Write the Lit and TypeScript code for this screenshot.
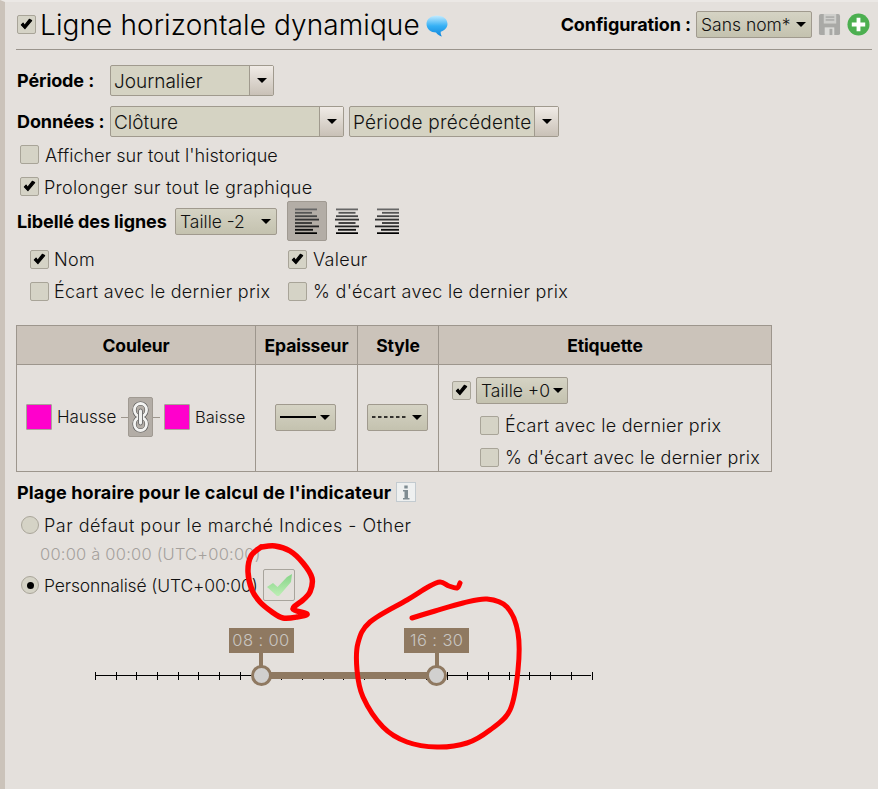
import { LitElement, html, css, svg } from "lit";
import { customElement } from "lit/decorators.js";

function smooth(p: number[][]): string {
  let d = `M${p[0][0]} ${p[0][1]}`;
  for (let i = 0; i < p.length - 1; i++) {
    const a = p[Math.max(0, i - 1)], b = p[i], c = p[i + 1], e = p[Math.min(p.length - 1, i + 2)];
    const c1 = [b[0] + (c[0] - a[0]) / 6, b[1] + (c[1] - a[1]) / 6];
    const c2 = [c[0] - (e[0] - b[0]) / 6, c[1] - (e[1] - b[1]) / 6];
    d += `C${c1[0].toFixed(1)} ${c1[1].toFixed(1)} ${c2[0].toFixed(1)} ${c2[1].toFixed(1)} ${c[0]} ${c[1]}`;
  }
  return d;
}
const RING1 = [[261,547],[275,546],[290,551],[303,563],[312,578],[310,592],[303,600],[293,609],[307,614],[297,617],[283,618],[272,612],[260,602],[252,590],[248,572],[251,556],[261,547]];
const RING2 = [[460,583],[457,588],[449,586],[440,582],[428,587],[407,600],[370,622],[358,643],[357,670],[363,697],[383,727],[407,742],[437,747],[467,743],[490,730],[510,710],[518,670],[518,633],[507,607],[487,599],[463,603],[435,611],[412,618]];

const tick = html`<svg class="tick" viewBox="0 0 16 16"><path d="M2.5 8.5 6.3 12.5 13.5 3.8 11 2.5 6 9 4.4 6.5Z" fill="#000" stroke="#000" stroke-width="1.2" stroke-linejoin="round"/></svg>`;
const cb = (on: boolean) => html`<span class="cb">${on ? tick : ""}</span>`;
const caret = html`<i class="caret"></i>`;

@customElement("app-root")
export class AppRoot extends LitElement {
  static styles = css`
    :host { display: block; width: 878px; height: 789px; position: relative; overflow: hidden;
      background: #e4e0dc; font-family: Inter, "Liberation Sans", sans-serif; font-size: 18px; color: #111; font-weight: 300; letter-spacing: 0.3px; }
    .page { box-sizing: border-box; height: 789px; border-left: 5px solid #cbc3ba; border-top: 2px solid #ebe8e5; padding: 0 6px 0 11px; }
    b { font-weight: 700; color: #000; letter-spacing: -0.1px; font-size: 18px; }
    .row { display: flex; align-items: center; }
    .head { border-bottom: 1px solid #9a948c; box-sizing: border-box; height: 48px; padding: 0 2px 2px 1px; }
    .title { font-size: 28px; font-weight: 300; margin-left: 4px; letter-spacing: 0.1px; color: #000; white-space: nowrap; }
    .bubble { width: 22px; height: 22px; margin-left: 6px; margin-top: 2px; flex: none; }
    .spacer { flex: 1; }
    .cfg { margin-right: 5px; white-space: nowrap; }
    .cb { width: 17px; height: 17px; flex: none; border: 1px solid #a8a498; border-radius: 2px; background: #d5d3c6; display: inline-flex; align-items: center; justify-content: center; }
    .tick { width: 15px; height: 15px; }
    .sel { box-sizing: border-box; display: flex; align-items: stretch; border: 1px solid #a09a8e; border-radius: 2px; background: #d5d3c3; height: 31px; }
    .sel span { flex: 1; padding: 2px 0 0 3px; align-self: center; font-size: 19px; white-space: nowrap; overflow: hidden; letter-spacing: 0; }
    .sel .btn { flex: none; width: 23px; border-left: 1px solid #a09a8e; background: linear-gradient(#f0ebe6, #c9c1b7); display: flex; align-items: center; justify-content: center; }
    .caret { display: block; flex: none; width: 0; height: 0; border: 5px solid transparent; border-top: 5px solid #000; border-bottom: 0; }
    .nat { box-sizing: border-box; display: flex; align-items: center; border: 1px solid #a09a8e; border-radius: 2px; background: linear-gradient(#d5d3c4, #c4c2af); height: 27px; padding: 0 5px 0 4px; justify-content: space-between; font-size: 17.500px; letter-spacing: 0; white-space: nowrap; }
    .r-per { height: 31px; margin-top: 15px; }
    .r-per b, .r-don b { width: 93px; padding-left: 1px; flex: none; white-space: nowrap; }
    .w1 { width: 164px; }
    .r-don { height: 31px; margin-top: 10px; }
    .w2 { width: 234px; }
    .w3 { width: 210px; margin-left: 5px; }
    .w3 span { letter-spacing: .25px; }
    .chk { height: 19px; margin-left: 4px; }
    .chk .cb { margin-right: 6px; }
    .c1 { margin-top: 8px; }
    .c2 { margin-top: 13px; }
    .chk .lab { white-space: nowrap; }
    .c1 .lab { letter-spacing: .05px; padding-top: 2px; }
    .c2 .lab { padding-top: 2px; }
    .c2 .cb { margin-right: 5px; }
    .r-lib { height: 40px; margin-top: 5px; }
    .r-lib b { width: 158px; padding-left: 1px; flex: none; white-space: nowrap; }
    .w4 { width: 102px; }
    .al { width: 40px; height: 40px; box-sizing: border-box; display: flex; align-items: center; justify-content: center; border-radius: 2px; }
    .al.on { background: #b3ada6; border: 1px solid #a09a92; margin-left: 10px; }
    .al svg { width: 24px; height: 26px; }
    .grid2 { display: grid; grid-template-columns: 258px auto; margin: 9px 0 0 14px; row-gap: 13px; height: 50px; }
    .grid2 .chk { margin: 0; }
    .grid2 .cb { margin-right: 5px; }
    .grid2 .chk:nth-child(even) .cb { margin-right: 6px; }
    table { border-collapse: collapse; margin-top: 25px; width: 755px; table-layout: fixed; }
    th, td { border: 1px solid #9d968d; padding: 0; }
    th { background: #cbc3ba; height: 38px; font-weight: 700; font-size: 17.500px; color: #000; letter-spacing: -0.1px; }
    td { height: 104px; padding-bottom: 2px; vertical-align: middle; }
    .colr { padding-left: 9px; }
    .sw { width: 24px; height: 24px; flex: none; background: #ff00cc; border: 1px solid #a8a498; border-radius: 1px; }
    .colr .t { margin-left: 5px; font-size: 17px; width: 64px; white-space: nowrap; letter-spacing: 0; }
    .colr .t.nr { width: auto; font-size: 16.500px; }
    .conn { height: 1px; width: 7px; flex: none; background: #9d968d; }
    .link { box-sizing: border-box; width: 25px; height: 40px; flex: none; background: #b3ada6; border: 1px solid #a09a92; border-radius: 2px; display: flex; align-items: center; justify-content: center; }
    .link svg { width: 19px; height: 32px; }
    .sw.two { margin-left: 4px; }
    .mid { display: flex; justify-content: center; padding-right: 2px; }
    .w5 { width: 61px; height: 27px; }
    .lbl { display: flex; flex-direction: column; padding: 11px 0 0 13px; height: 93px; margin-bottom: -2px; }
    .w6 { width: 92px; margin-left: 5px; padding-right: 4px; }
    .lbl .chk { margin: 12px 0 0 28px; }
    .lbl .first { height: 27px; }
    .lbl .chk + .chk { margin-top: 13px; }
    .r-pl { height: 20px; margin-top: 10px; }
    .r-pl b { letter-spacing: .13px; white-space: nowrap; padding-left: 1px; }
    .info { width: 20px; height: 20px; margin-left: 5px; flex: none; }
    .rad { width: 18px; height: 18px; flex: none; box-sizing: border-box; border-radius: 50%; background: #d5d3c6; border: 1px solid #aaa69a; display: flex; align-items: center; justify-content: center; margin-right: 5px; }
    .rad i { display: block; width: 7px; height: 7px; border-radius: 50%; background: #000; }
    .r-r1 { height: 20px; margin: 13px 0 0 5px; white-space: nowrap; }
    .r-r1 span:last-child { letter-spacing: .5px; }
    .grey { color: #a5a19c; margin: 9px 0 0 24px; height: 20px; font-size: 16.500px; letter-spacing: .2px; white-space: nowrap; }
    .r-r2 { height: 32px; margin: 5px 0 0 5px; white-space: nowrap; }
    .r-r2 > span:nth-child(2) { letter-spacing: -.15px; font-size: 17.500px; }
    .valid { width: 32px; height: 32px; box-sizing: border-box; border: 1px solid #a8a49c; border-radius: 2px; margin-left: 5px; display: flex; align-items: center; justify-content: center; flex: none; }
    .valid svg { width: 30px; height: 30px; }
    .slider { position: relative; margin: 28px 0 0 79px; width: 496px; height: 60px; }
    .axis { position: absolute; left: 0; right: 0; top: 46px; height: 1px; background: #000; }
    .mark { position: absolute; top: 43px; height: 8px; width: 1px; background: #000; }
    .range { position: absolute; top: 43px; height: 7px; background: #8f7961; }
    .stem { position: absolute; top: 24px; width: 4px; height: 15px; margin-left: -1.500px; background: #8f7961; }
    .tip { position: absolute; top: -1px; width: 65px; height: 25px; margin-left: -32px; background: #8f7961; color: #c9c6c1; text-align: center; line-height: 25px; font-size: 16.500px; font-weight: 300; letter-spacing: .4px; white-space: nowrap; }
    .knob { position: absolute; top: 36px; width: 21px; height: 21px; margin-left: -10px; box-sizing: border-box; border-radius: 50%; background: #d1d0cf; border: 3px solid #8f7961; }
    .ink { position: absolute; left: 0; top: 0; width: 878px; height: 789px; pointer-events: none; }
    .flop { width: 23px; height: 23px; margin-left: 6px; flex: none; }
    .plus { width: 23px; height: 23px; margin-left: 6px; flex: none; }
    .w7 { width: 116px; }
  `;

  render() {
    const shades = ["#666", "#555", "#444", "#333", "#333", "#222", "#111", "#000"];
    const ws = [22, 17, 22, 24, 17, 24, 18, 22];
    const alignIcon = (fn: (w: number) => number) => html`<svg viewBox="0 0 24 26">${ws.map((w, i) => svg`<rect x=${fn(w)} y=${.5 + i * 3.4} width=${w} height="1.800" fill=${shades[i]}/>`)}</svg>`;
    const hours = Array.from({ length: 25 }, (_, i) => i);
    const u = 496.5 / 24;
    const a = 8 * u, b = 16.5 * u;
    return html`
      <div class="page">
        <div class="row head">
          <span class="cb">${tick}</span>
          <span class="title">Ligne horizontale dynamique</span>
          <svg class="bubble" viewBox="0 0 22 22"><defs><linearGradient id="bl" x1="0" y1="0" x2="0" y2="1"><stop offset="0" stop-color="#c4ecff"/><stop offset=".5" stop-color="#35b0f5"/><stop offset="1" stop-color="#1186db"/></linearGradient></defs><path d="M11 0.500C5 .5 .5 4 .5 9c0 5 4.500 8.500 9.500 8.500 1.500 2 3.500 3.500 6 4-1-1.200-1.400-2.800-1.300-4.800C18.500 15.500 21.500 12.500 21.500 9 21.500 4 17 .5 11 .5Z" fill="url(#bl)"/></svg>
          <span class="spacer"></span>
          <b class="cfg">Configuration :</b>
          <div class="nat w7"><span>Sans nom*</span>${caret}</div>
          <svg class="flop" viewBox="0 0 24 24"><path d="M1 3a2 2 0 0 1 2-2h18a2 2 0 0 1 2 2v18a2 2 0 0 1-2 2H3a2 2 0 0 1-2-2Z" fill="#a9a9a6"/><rect x="6" y="1" width="13" height="10" fill="#cfcfcc"/><rect x="8" y="3.500" width="9" height="1.500" fill="#a9a9a6"/><rect x="8" y="6.500" width="9" height="1.500" fill="#a9a9a6"/><rect x="7" y="15" width="10" height="8" fill="#dcdcd9"/><rect x="12" y="16.500" width="3" height="6.500" fill="#a9a9a6"/></svg>
          <svg class="plus" viewBox="0 0 24 24"><circle cx="12" cy="12" r="11.500" fill="#4caf50"/><path d="M10 5h4v5h5v4h-5v5h-4v-5H5v-4h5Z" fill="#fff"/></svg>
        </div>

        <div class="row r-per"><b>Période :</b><div class="sel w1"><span>Journalier</span><div class="btn">${caret}</div></div></div>
        <div class="row r-don"><b>Données :</b><div class="sel w2"><span>Clôture</span><div class="btn">${caret}</div></div><div class="sel w3"><span>Période précédente</span><div class="btn">${caret}</div></div></div>

        <div class="row chk c1">${cb(false)}<span class="lab">Afficher sur tout l'historique</span></div>
        <div class="row chk c2">${cb(true)}<span class="lab">Prolonger sur tout le graphique</span></div>

        <div class="row r-lib">
          <b>Libellé des lignes</b>
          <div class="nat w4"><span>Taille -2</span>${caret}</div>
          <div class="al on">${alignIcon(() => 0)}</div>
          <div class="al">${alignIcon(w => (24 - w) / 2)}</div>
          <div class="al">${alignIcon(w => 24 - w)}</div>
        </div>

        <div class="grid2">
          <div class="row chk">${cb(true)}<span class="lab">Nom</span></div>
          <div class="row chk">${cb(true)}<span class="lab">Valeur</span></div>
          <div class="row chk">${cb(false)}<span class="lab">Écart avec le dernier prix</span></div>
          <div class="row chk">${cb(false)}<span class="lab">% d'écart avec le dernier prix</span></div>
        </div>

        <table>
          <colgroup><col style="width:239px"/><col style="width:102px"/><col style="width:81px"/><col style="width:333px"/></colgroup>
          <tr><th>Couleur</th><th>Epaisseur</th><th>Style</th><th>Etiquette</th></tr>
          <tr>
            <td><div class="row colr">
              <span class="sw"></span><span class="t">Hausse</span><span class="conn"></span>
              <div class="link"><svg viewBox="0 0 19 32" fill="none">
                <rect x="3.500" y="2.500" width="12" height="13" rx="6" stroke="#555" stroke-width="4"/><rect x="3.500" y="16.500" width="12" height="13" rx="6" stroke="#555" stroke-width="4"/>
                <rect x="3.500" y="2.500" width="12" height="13" rx="6" stroke="#f4f4f2" stroke-width="2.800"/><rect x="3.500" y="16.500" width="12" height="13" rx="6" stroke="#f4f4f2" stroke-width="2.800"/>
                <rect x="7.500" y="8" width="4" height="16" rx="2" fill="#f0f0ee" stroke="#666" stroke-width=".9"/></svg></div>
              <span class="conn"></span><span class="sw two"></span><span class="t nr">Baisse</span>
            </div></td>
            <td><div class="mid"><div class="nat w5"><svg width="36" height="4"><rect y="1" width="36" height="2" fill="#000"/></svg>${caret}</div></div></td>
            <td><div class="mid"><div class="nat w5"><svg width="36" height="4"><path d="M0 2H36" stroke="#000" stroke-width="1.500" stroke-dasharray="3.500 2.500"/></svg>${caret}</div></div></td>
            <td><div class="lbl">
              <div class="row first">${cb(true)}<div class="nat w6"><span>Taille +0</span>${caret}</div></div>
              <div class="row chk">${cb(false)}<span class="lab">Écart avec le dernier prix</span></div>
              <div class="row chk">${cb(false)}<span class="lab">% d'écart avec le dernier prix</span></div>
            </div></td>
          </tr>
        </table>

        <div class="row r-pl"><b>Plage horaire pour le calcul de l'indicateur</b>
          <svg class="info" viewBox="0 0 20 20"><rect x=".5" y=".5" width="19" height="19" fill="#eef0f0" stroke="#c3cbd0"/><rect x="8.300" y="3.500" width="3.400" height="3" fill="#7f8c92"/><path d="M7 8h5v8h1.500v1.500h-6.500V16h1.500V9.500H7Z" fill="#7f8c92"/></svg>
        </div>
        <div class="row r-r1"><span class="rad"></span><span>Par défaut pour le marché Indices - Other</span></div>
        <div class="grey">00:00 à 00:00 (UTC+00:00)</div>
        <div class="row r-r2"><span class="rad"><i></i></span><span>Personnalisé (UTC+00:00)</span>
          <div class="valid"><svg viewBox="0 0 30 30"><defs><linearGradient id="gr" x1="0" y1="0" x2="0" y2="1"><stop offset="0" stop-color="#86d488"/><stop offset="1" stop-color="#bdeeb5"/></linearGradient></defs><path d="M3 17 9 13 13.500 17 23 7 28 4 27 12 15 26 13 26Z" fill="url(#gr)"/></svg></div>
        </div>

        <div class="slider">
          <div class="axis"></div>
          ${hours.map(h => html`<span class="mark" style="left:${(h * u).toFixed(1)}px"></span>`)}
          <div class="range" style="left:${a.toFixed(1)}px;width:${(b - a).toFixed(1)}px"></div>
          ${[[a, "08 : 00"], [b, "16 : 30"]].map(([x, t]) => html`
            <div class="stem" style="left:${(x as number).toFixed(1)}px"></div>
            <div class="tip" style="left:${(x as number).toFixed(1)}px">${t}</div>
            <div class="knob" style="left:${(x as number).toFixed(1)}px"></div>`)}
        </div>
      </div>
      <svg class="ink" viewBox="0 0 878 789" fill="none" stroke="#f00" stroke-linecap="round" stroke-linejoin="round">
        <path d=${smooth(RING1)} stroke-width="5.500"/>
        <path d=${smooth(RING2)} stroke-width="5"/>
      </svg>
    `;
  }
}
